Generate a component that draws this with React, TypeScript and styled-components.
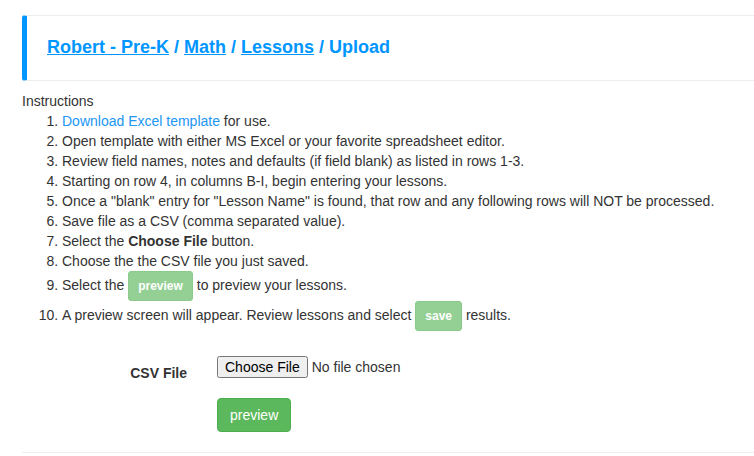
import React from 'react';
import styled, { createGlobalStyle } from 'styled-components';

const GlobalStyle = createGlobalStyle`
  body {
    margin: 0;
    font-family: "Liberation Sans", Arial, sans-serif;
    font-size: 14px;
    line-height: 20px;
    color: #333;
    background: #fff;
  }
`;

const Page = styled.div`
  padding: 15px 0 0 22px;
`;

const Header = styled.div`
  display: flex;
  align-items: center;
  box-sizing: border-box;
  height: 66px;
  padding: 0 0 3px 20px;
  border-top: 1px solid #eee;
  border-bottom: 1px solid #eee;
  border-left: 5px solid #0096ff;
  border-radius: 3px 0 0 3px;
`;

const Title = styled.h3`
  margin: 0;
  font-size: 18px;
  font-weight: bold;
  color: #0096ff;

  a {
    color: #0096ff;
    text-decoration: underline;
  }
`;

const Instructions = styled.div`
  margin-top: 10px;
`;

const Steps = styled.ol`
  margin: 0;
  padding-left: 40px;
`;

const TemplateLink = styled.a`
  color: #2196f3;
  text-decoration: none;
`;

const SmallButton = styled.button`
  display: inline-block;
  vertical-align: middle;
  padding: 5px 9px;
  font-family: inherit;
  font-size: 12px;
  font-weight: bold;
  line-height: 18px;
  color: #fff;
  background: #5cb85c;
  border: 1px solid #4cae4c;
  border-radius: 3px;
  opacity: 0.65;
  cursor: not-allowed;
`;

const Form = styled.div`
  display: grid;
  grid-template-columns: 165px auto;
  column-gap: 30px;
  row-gap: 15px;
  justify-content: start;
  margin-top: 25px;
`;

const Label = styled.label`
  padding-top: 7px;
  text-align: right;
  font-weight: bold;
`;

const FileInput = styled.input`
  align-self: start;
  font-family: "Liberation Sans", Arial, sans-serif;
  font-size: 14px;
`;

const PreviewButton = styled.button`
  justify-self: start;
  padding: 6px 12px;
  font-family: inherit;
  font-size: 14px;
  line-height: 20px;
  color: #fff;
  background: #5cb85c;
  border: 1px solid #4cae4c;
  border-radius: 4px;
`;

const Divider = styled.hr`
  margin: 20px 0 0;
  border: 0;
  border-top: 1px solid #eee;
`;

const App = () => {
  const steps: React.ReactNode[] = [
    <>
      <TemplateLink href="#">Download Excel template</TemplateLink> for use.
    </>,
    'Open template with either MS Excel or your favorite spreadsheet editor.',
    'Review field names, notes and defaults (if field blank) as listed in rows 1-3.',
    'Starting on row 4, in columns B-I, begin entering your lessons.',
    'Once a "blank" entry for "Lesson Name" is found, that row and any following rows will NOT be processed.',
    'Save file as a CSV (comma separated value).',
    <>
      Select the <b>Choose File</b> button.
    </>,
    'Choose the the CSV file you just saved.',
    <>
      Select the <SmallButton disabled>preview</SmallButton> to preview your lessons.
    </>,
    <>
      A preview screen will appear. Review lessons and select <SmallButton disabled>save</SmallButton> results.
    </>,
  ];

  return (
    <Page>
      <GlobalStyle />
      <Header>
        <Title>
          <a href="#">Robert - Pre-K</a> / <a href="#">Math</a> / <a href="#">Lessons</a> / Upload
        </Title>
      </Header>

      <Instructions>
        Instructions
        <Steps>
          {steps.map((step, i) => (
            <li key={i}>{step}</li>
          ))}
        </Steps>
      </Instructions>

      <Form>
        <Label>CSV File</Label>
        <FileInput type="file" />
        <span />
        <PreviewButton type="button">preview</PreviewButton>
      </Form>

      <Divider />
    </Page>
  );
};

export default App;
